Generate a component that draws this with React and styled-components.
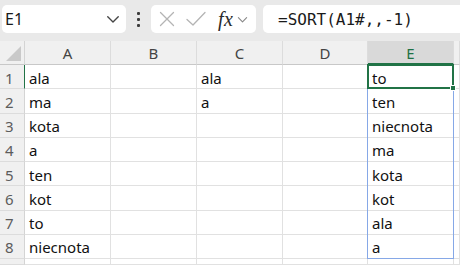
import React from "react";
import styled, { createGlobalStyle, css } from "styled-components";

const Global = createGlobalStyle`
  html, body { margin: 0; padding: 0; background: #ffffff; }
  body { width: 460px; height: 265px; overflow: hidden; font-family: "Noto Sans", "Open Sans", sans-serif; }
  * { box-sizing: border-box; }
`;

const Page = styled.div`
  width: 460px;
  height: 265px;
  display: flex;
  flex-direction: column;
  overflow: hidden;
`;

const Toolbar = styled.div`
  height: 41px;
  background: #e9e9e9;
  display: flex;
  align-items: flex-start;
  padding: 5px 0 0 2px;
`;

const NameBox = styled.div`
  width: 124px;
  height: 28px;
  background: #fff;
  border-radius: 5px;
  display: flex;
  align-items: center;
  justify-content: space-between;
  padding: 0 6px 0 3px;
  font-size: 16px;
  color: #1a1a1a;
`;

const Dots = styled.div`
  width: 25px;
  height: 28px;
  display: flex;
  flex-direction: column;
  align-items: center;
  justify-content: center;
  gap: 3px;
  & > span {
    width: 3px;
    height: 3px;
    border-radius: 1px;
    background: #3c3c3c;
  }
`;

const FxBox = styled.div`
  width: 105px;
  height: 28px;
  background: #fff;
  border-radius: 5px;
  display: flex;
  align-items: center;
  padding: 0 0 0 7px;
`;

const Fx = styled.span`
  font-family: "Liberation Serif", "DejaVu Serif", serif;
  font-style: italic;
  font-size: 20px;
  color: #2a2a2a;
  margin-left: 11px;
  letter-spacing: 0.5px;
`;

const FormulaBox = styled.div`
  flex: 1;
  height: 28px;
  margin-left: 7px;
  background: #fff;
  border-radius: 5px 0 0 5px;
  display: flex;
  align-items: center;
  padding-left: 15px;
  font-family: "DejaVu Sans Mono", "Liberation Mono", monospace;
  font-size: 16px;
  color: #1a1a1a;
`;

const Sheet = styled.div`
  display: grid;
  grid-template-columns: 25px 86px 86px 86px 85px 86px 1fr;
  grid-template-rows: 24px repeat(8, 24.25px) 1fr;
  flex: 1;
`;

const place = css`
  grid-row: ${(p) => p.$r};
  grid-column: ${(p) => p.$c};
`;

const Corner = styled.div`
  ${place}
  background: #f0f0f0;
  border-right: 1px solid #d4d4d4;
  border-bottom: 1px solid #c8c8c8;
  display: flex;
  align-items: flex-end;
  justify-content: flex-end;
  padding: 0 3px 3px 0;
`;

const ColHeader = styled.div`
  ${place}
  background: ${(p) => (p.$active ? "#d9d9d9" : "#f0f0f0")};
  color: ${(p) => (p.$active ? "#1e7145" : "#444")};
  border-right: 1px solid #dcdcdc;
  border-bottom: ${(p) => (p.$active ? "2px solid #217346" : "1px solid #c8c8c8")};
  display: flex;
  align-items: center;
  justify-content: center;
  font-size: 15px;
  padding-top: ${(p) => (p.$active ? "1px" : "0")};
`;

const RowHeader = styled.div`
  ${place}
  background: #f0f0f0;
  color: #5c5c5c;
  border-right: 1px solid ${(p) => (p.$active ? "#217346" : "#d4d4d4")};
  border-bottom: 1px solid #dcdcdc;
  display: flex;
  align-items: center;
  padding: 2px 0 0 5px;
  font-size: 15px;
`;

const Cell = styled.div`
  ${place}
  border-right: 1px solid #e1e1e1;
  border-bottom: 1px solid #e1e1e1;
  display: flex;
  align-items: center;
  padding: 2px 0 0 4px;
  font-size: 15px;
  color: #111;
  white-space: nowrap;
  overflow: hidden;
`;

const overlay = css`
  grid-column: 6 / 7;
  pointer-events: none;
  margin: -1px 0 0 -1px;
`;

const SpillBox = styled.div`
  ${overlay}
  grid-row: 2 / 10;
  border: 1.5px solid #86a8e7;
  z-index: 2;
`;

const SelectBox = styled.div`
  ${overlay}
  grid-row: 2 / 3;
  border: 2px solid #217346;
  position: relative;
  z-index: 3;
`;

const Handle = styled.span`
  position: absolute;
  right: -4px;
  bottom: -4px;
  width: 6px;
  height: 6px;
  background: #217346;
  border: 1px solid #fff;
`;

const Chevron = ({ size = 12, color = "#555" }) => (
  <svg width={size} height={size} viewBox="0 0 12 12" fill="none">
    <path d="M1.5 4 L6 8.5 L10.5 4" stroke={color} strokeWidth="1.2" strokeLinecap="round" strokeLinejoin="round" />
  </svg>
);

const CrossIcon = () => (
  <svg width="18" height="18" viewBox="0 0 18 18" fill="none">
    <path d="M2.5 2.5 L15.5 15.5 M15.5 2.5 L2.5 15.5" stroke="#b4b4b4" strokeWidth="1.3" strokeLinecap="round" />
  </svg>
);

const CheckIcon = () => (
  <svg width="22" height="18" viewBox="0 0 22 18" fill="none" style={{ marginLeft: 9 }}>
    <path d="M2 9.5 L8 15 L20 2.5" stroke="#b4b4b4" strokeWidth="1.3" strokeLinecap="round" strokeLinejoin="round" />
  </svg>
);

const CornerTriangle = () => (
  <svg width="15" height="15" viewBox="0 0 15 15">
    <polygon points="15,0 15,15 0,15" fill="#c9c9c9" />
  </svg>
);

const colA = ["ala", "ma", "kota", "a", "ten", "kot", "to", "niecnota"];
const colC = ["ala", "a", "", "", "", "", "", ""];
const colE = ["to", "ten", "niecnota", "ma", "kota", "kot", "ala", "a"];
const cols = ["A", "B", "C", "D", "E", ""];

export default function App() {
  const rows = [];
  for (let i = 0; i < 9; i++) {
    const r = i + 2;
    const vals = i < 8 ? [colA[i], "", colC[i], "", colE[i], ""] : ["", "", "", "", "", ""];
    rows.push(
      <React.Fragment key={i}>
        <RowHeader $r={r} $c={1} $active={i === 0}>
          {i < 8 ? i + 1 : ""}
        </RowHeader>
        {vals.map((v, j) => (
          <Cell key={j} $r={r} $c={j + 2}>
            {v}
          </Cell>
        ))}
      </React.Fragment>
    );
  }
  return (
    <Page>
      <Global />
      <Toolbar>
        <NameBox>
          <span>E1</span>
          <Chevron size={14} color="#444" />
        </NameBox>
        <Dots>
          <span />
          <span />
          <span />
        </Dots>
        <FxBox>
          <CrossIcon />
          <CheckIcon />
          <Fx>fx</Fx>
          <span style={{ marginLeft: 4, display: "flex" }}>
            <Chevron size={11} color="#888" />
          </span>
        </FxBox>
        <FormulaBox>=SORT(A1#,,-1)</FormulaBox>
      </Toolbar>
      <Sheet>
        <Corner $r={1} $c={1}>
          <CornerTriangle />
        </Corner>
        {cols.map((c, j) => (
          <ColHeader key={j} $r={1} $c={j + 2} $active={c === "E"}>
            {c}
          </ColHeader>
        ))}
        {rows}
        <SpillBox />
        <SelectBox>
          <Handle />
        </SelectBox>
      </Sheet>
    </Page>
  );
}
